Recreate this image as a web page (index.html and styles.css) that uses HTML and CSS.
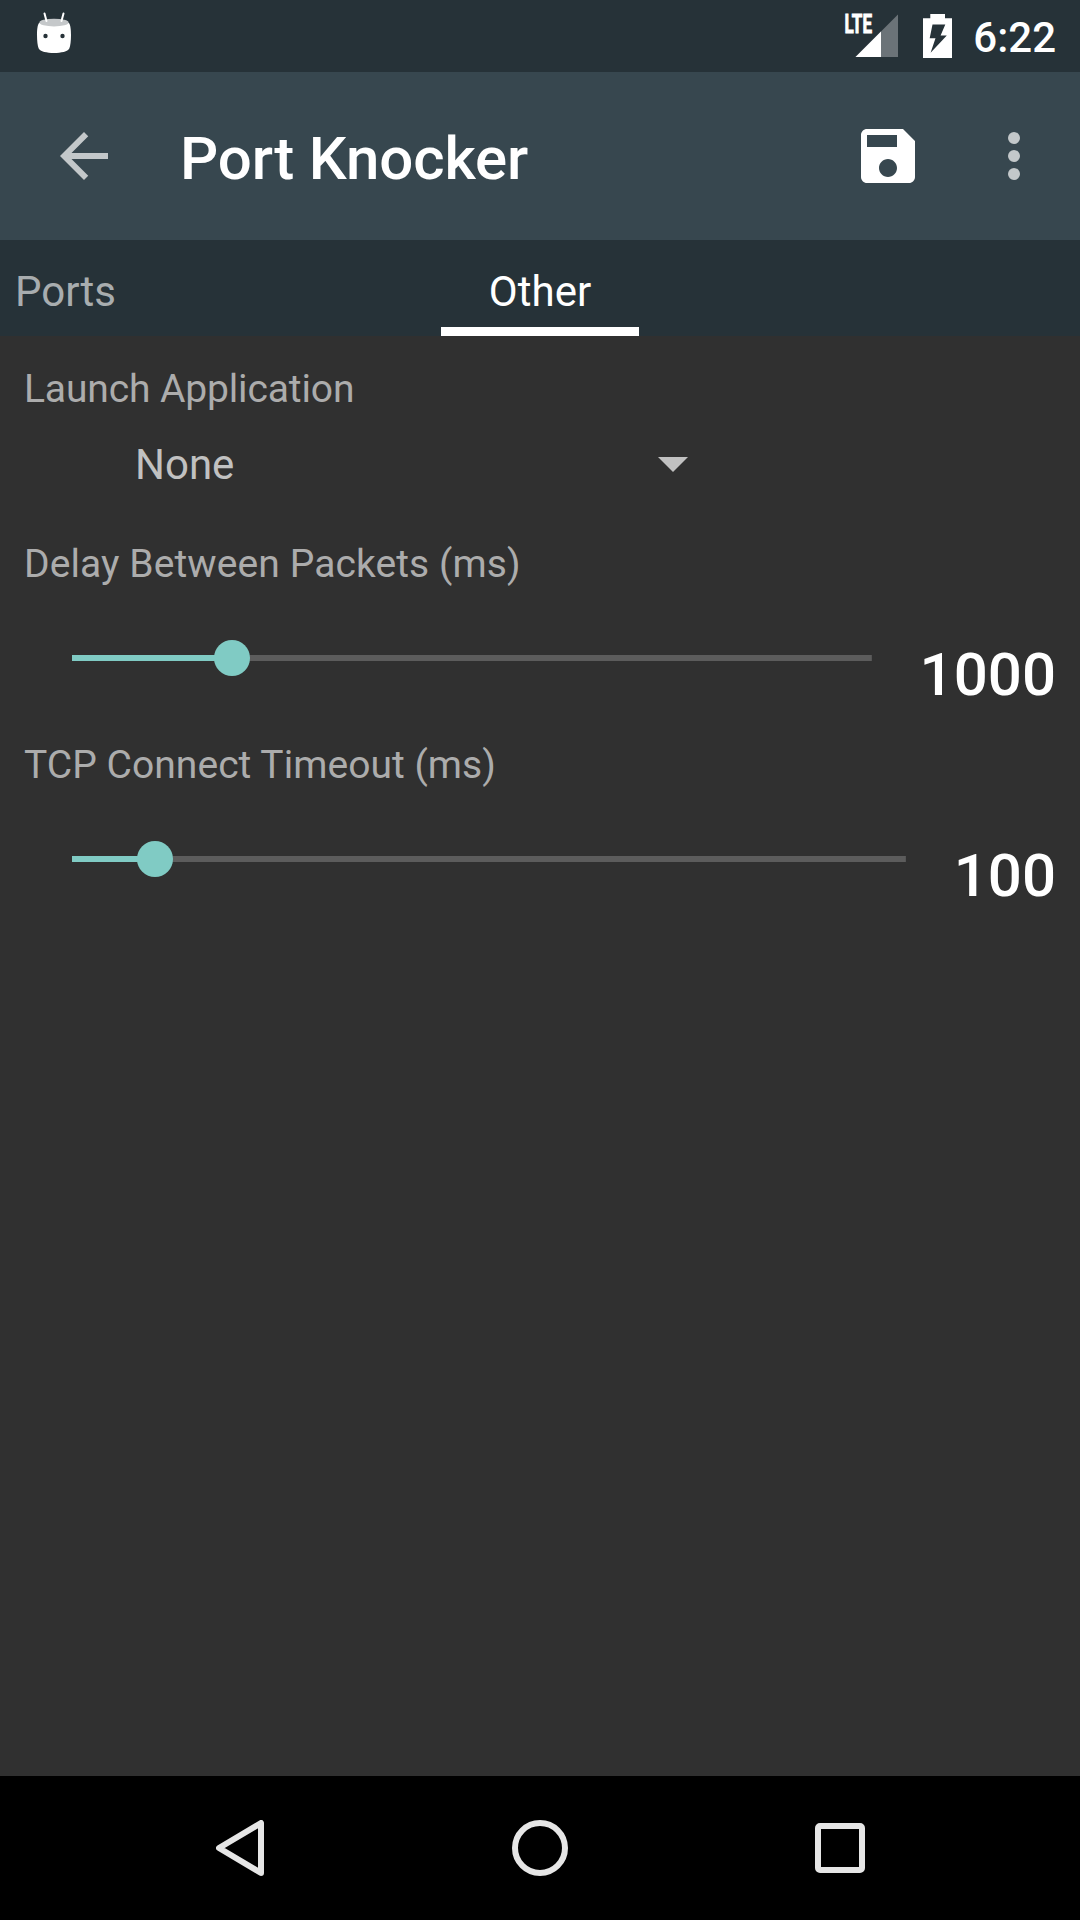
FILE: index.html
```html
<!DOCTYPE html>
<html lang="en">
<head>
<meta charset="utf-8">
<title>Port Knocker</title>
<link rel="stylesheet" href="styles.css">
</head>
<body>
<div class="screen">
  <header class="status-bar">
    <svg class="status-robot" width="36" height="42" viewBox="36 12 36 42">
      <path d="M39 23C37.500 25 37 30 37 35c0 6 .6 11 1.700 13.500C40 51.500 47 53 54 53s14-1.500 15.300-4.500C70.400 46 71 41 71 35c0-5-.5-10-2-12z" fill="#fff"/>
      <ellipse cx="54" cy="22.600" rx="14.700" ry="3.900" fill="#c5c8ca"/>
      <path d="M44.500 13.500l2 7.500M63.500 13.500l-2 7.500" stroke="#fff" stroke-width="2" stroke-linecap="round"/>
      <circle cx="45.500" cy="36" r="2.200" fill="#263238"/>
      <circle cx="62.500" cy="36" r="2.200" fill="#263238"/>
    </svg>
    <div class="status-icons">
      <svg class="status-signal" width="64" height="64" viewBox="835 4 64 64">
        <path d="M898 14.500V57H855.500z" fill="#fff" fill-opacity=".32"/>
        <path d="M881 31.500V57H855.500z" fill="#fff"/>
        <text class="network-type" x="844.500" y="33.400" textLength="27.500" lengthAdjust="spacingAndGlyphs">LTE</text>
      </svg>
      <svg class="status-battery" width="29" height="44" viewBox="923 14 29 44">
        <path d="M930.300 14h14.700v4.200h7V58h-29V18.200h7.300z" fill="#fff"/>
        <path d="M932.500 24.600h12.800l-4.700 11h6.200l-16.200 17.200 4.900-14.500h-5.800z" fill="#263238"/>
      </svg>
      <span class="clock">6:22</span>
    </div>
  </header>

  <div class="toolbar">
    <svg class="icon icon-muted" viewBox="0 0 24 24"><path d="M20 11H7.830l5.590-5.590L12 4l-8 8 8 8 1.410-1.410L7.830 13H20z"/></svg>
    <h1 class="title">Port Knocker</h1>
    <div class="actions">
      <svg class="icon" viewBox="0 0 24 24"><path d="M17 3H5c-1.110 0-2 .9-2 2v14c0 1.100.89 2 2 2h14c1.100 0 2-.9 2-2V7zm-5 16c-1.660 0-3-1.340-3-3s1.340-3 3-3 3 1.340 3 3-1.340 3-3 3zm3-10H5V5h10z"/></svg>
      <svg class="icon icon-muted" viewBox="0 0 24 24"><circle cx="12" cy="6" r="2"/><circle cx="12" cy="12" r="2"/><circle cx="12" cy="18" r="2"/></svg>
    </div>
  </div>

  <nav class="tabs">
    <div class="tab">Ports</div>
    <div class="tab tab-active">Other</div>
  </nav>

  <main class="content">
    <div class="label label-launch">Launch Application</div>
    <div class="spinner">
      <span>None</span>
      <svg width="30" height="15" viewBox="0 0 30 15"><path d="M0 0h30L15 15z" fill="#c1c1c1"/></svg>
    </div>

    <div class="label label-delay">Delay Between Packets (ms)</div>
    <div class="setting">
      <div class="slider"><div class="slider-fill" style="width:20%"></div><div class="slider-thumb"></div></div>
      <div class="value">1000</div>
    </div>

    <div class="label label-timeout">TCP Connect Timeout (ms)</div>
    <div class="setting">
      <div class="slider"><div class="slider-fill" style="width:10%"></div><div class="slider-thumb"></div></div>
      <div class="value">100</div>
    </div>
  </main>

  <footer class="nav-bar">
    <svg width="48" height="56" viewBox="216 1820 48 56"><path d="M261 1823v50l-42-25z"/></svg>
    <svg width="56" height="56" viewBox="0 0 56 56"><circle cx="28" cy="28" r="25"/></svg>
    <svg width="50" height="50" viewBox="0 0 50 50"><rect x="3" y="3" width="44" height="44" rx="2"/></svg>
  </footer>
</div>
</body>
</html>
```
FILE: styles.css
```css
* {
  box-sizing: border-box;
}

body {
  margin: 0;
  background: #303030;
  font-family: Roboto, "Noto Sans", sans-serif;
}

svg {
  display: block;
  flex: none;
}

.screen {
  display: flex;
  flex-direction: column;
  width: 1080px;
  height: 1920px;
  overflow: hidden;
  background: #303030;
}

.status-bar {
  display: flex;
  justify-content: space-between;
  height: 72px;
  padding: 0 24px 0 36px;
  background: #263238;
}

.status-robot {
  margin-top: 12px;
}

.status-icons {
  display: flex;
}

.status-signal {
  margin: 4px 24px 0 0;
}

.status-battery {
  margin: 14px 21px 0 0;
}

.network-type {
  font-size: 26px;
  font-weight: 700;
  fill: #fff;
  stroke: #fff;
  stroke-width: 0.9px;
}

.clock {
  width: 83px;
  padding-top: 2px;
  color: #fff;
  font-size: 42px;
  font-weight: 500;
  line-height: 71px;
  text-align: right;
}

.toolbar {
  display: flex;
  align-items: center;
  height: 168px;
  padding: 0 30px 0 48px;
  background: #37474f;
}

.icon {
  width: 72px;
  height: 72px;
  fill: #fff;
}

.icon-muted {
  fill: #c3c8ca;
}

.title {
  flex: 1;
  margin: 0 0 0 60px;
  padding-top: 5px;
  color: #fff;
  font-size: 60px;
  font-weight: 500;
  letter-spacing: -0.15px;
  line-height: 71px;
}

.actions {
  display: flex;
  gap: 54px;
}

.tabs {
  display: grid;
  grid-template-columns: 441px 198px;
  height: 96px;
  background: #263238;
}

.tab {
  padding: 16px 0 0 15px;
  color: #a8adaf;
  font-size: 42px;
  line-height: 71px;
}

.tab-active {
  padding-left: 0;
  border-bottom: 9px solid #fff;
  color: #fff;
  text-align: center;
}

.content {
  flex: 1;
  padding: 29px 24px 0;
}

.label {
  color: #acacac;
  font-size: 39px;
  line-height: 48px;
}

.label-launch {
  letter-spacing: -0.13px;
}

.spinner {
  display: flex;
  align-items: center;
  justify-content: space-between;
  width: 664px;
  height: 57px;
  margin-top: 23px;
  padding-left: 111px;
  color: #c1c1c1;
  font-size: 42px;
}

.label-delay {
  margin-top: 47px;
  letter-spacing: 0.09px;
}

.label-timeout {
  margin-top: 43px;
  letter-spacing: 0.04px;
}

.setting {
  display: flex;
  gap: 48px;
  height: 110px;
  padding: 52px 0 0 48px;
}

.slider {
  display: flex;
  flex: 1;
  align-items: center;
  height: 36px;
  background: linear-gradient(#5c5c5c, #5c5c5c) center / 100% 6px no-repeat;
}

.slider-fill {
  height: 6px;
  background: #80cbc4;
}

.slider-thumb {
  flex: none;
  width: 36px;
  height: 36px;
  margin-left: -18px;
  border-radius: 50%;
  background: #80cbc4;
}

.value {
  color: #fff;
  font-size: 60px;
  font-weight: 500;
  line-height: 69px;
}

.nav-bar {
  display: grid;
  grid-template-columns: 300px 300px 300px;
  align-items: center;
  justify-content: center;
  justify-items: center;
  height: 144px;
  background: #000;
}

.nav-bar svg {
  fill: none;
  stroke: #e6e6e6;
  stroke-width: 6;
  stroke-linejoin: round;
}
```
